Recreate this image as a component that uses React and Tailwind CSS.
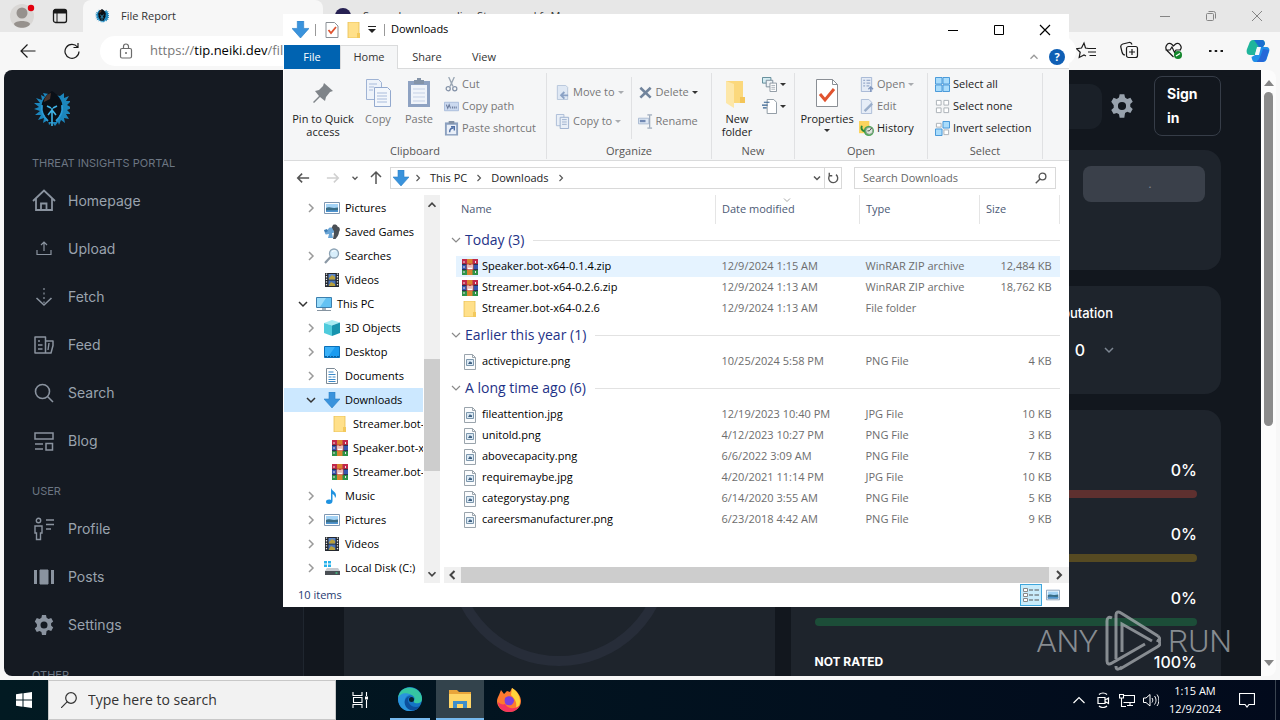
import { clsx } from 'clsx'

const NAV = [
  {
    title: 'THREAT INSIGHTS PORTAL',
    items: [
      { label: 'Homepage', icon: 'home' },
      { label: 'Upload', icon: 'upload' },
      { label: 'Fetch', icon: 'fetch' },
      { label: 'Feed', icon: 'feed' },
      { label: 'Search', icon: 'search' },
      { label: 'Blog', icon: 'blog' },
    ],
  },
  {
    title: 'USER',
    items: [
      { label: 'Profile', icon: 'profile' },
      { label: 'Posts', icon: 'posts' },
      { label: 'Settings', icon: 'gear' },
    ],
  },
  { title: 'OTHER', items: [] },
]

const TREE = [
  { label: 'Pictures', icon: 'picture', level: 1, arrow: 'closed' },
  { label: 'Saved Games', icon: 'games', level: 1 },
  { label: 'Searches', icon: 'lens', level: 1, arrow: 'closed' },
  { label: 'Videos', icon: 'film', level: 1 },
  { label: 'This PC', icon: 'pc', level: 0, arrow: 'open' },
  { label: '3D Objects', icon: 'cube', level: 1, arrow: 'closed' },
  { label: 'Desktop', icon: 'desktop', level: 1, arrow: 'closed' },
  { label: 'Documents', icon: 'document', level: 1, arrow: 'closed' },
  { label: 'Downloads', icon: 'download', level: 1, arrow: 'open', selected: true },
  { label: 'Streamer.bot-x64-0.2.6', icon: 'folder', level: 2 },
  { label: 'Speaker.bot-x64-0.1.4', icon: 'rar', level: 2 },
  { label: 'Streamer.bot-x64-0.2.6', icon: 'rar', level: 2 },
  { label: 'Music', icon: 'music', level: 1, arrow: 'closed' },
  { label: 'Pictures', icon: 'picture', level: 1, arrow: 'closed' },
  { label: 'Videos', icon: 'film', level: 1, arrow: 'closed' },
  { label: 'Local Disk (C:)', icon: 'disk', level: 1, arrow: 'closed' },
]

const LEVEL_PAD = ['pl-[11px]', 'pl-[19px]', 'pl-[27px]']

const GROUPS = [
  {
    title: 'Today (3)',
    files: [
      ['rar', 'Speaker.bot-x64-0.1.4.zip', '12/9/2024 1:15 AM', 'WinRAR ZIP archive', '12,484 KB'],
      ['rar', 'Streamer.bot-x64-0.2.6.zip', '12/9/2024 1:13 AM', 'WinRAR ZIP archive', '18,762 KB'],
      ['folder', 'Streamer.bot-x64-0.2.6', '12/9/2024 1:13 AM', 'File folder', ''],
    ],
  },
  {
    title: 'Earlier this year (1)',
    files: [['image', 'activepicture.png', '10/25/2024 5:58 PM', 'PNG File', '4 KB']],
  },
  {
    title: 'A long time ago (6)',
    files: [
      ['image', 'fileattention.jpg', '12/19/2023 10:40 PM', 'JPG File', '10 KB'],
      ['image', 'unitold.png', '4/12/2023 10:27 PM', 'PNG File', '3 KB'],
      ['image', 'abovecapacity.png', '6/6/2022 3:09 AM', 'PNG File', '7 KB'],
      ['image', 'requiremaybe.jpg', '4/20/2021 11:14 PM', 'JPG File', '10 KB'],
      ['image', 'categorystay.png', '6/14/2020 3:55 AM', 'PNG File', '5 KB'],
      ['image', 'careersmanufacturer.png', '6/23/2018 4:42 AM', 'PNG File', '9 KB'],
    ],
  },
]

const GEAR =
  'M10 2h4l.6 2.8 1.9 1.1 2.7-.9 2 3.4-2.1 1.9v2.3l2.1 1.9-2 3.4-2.7-.9-1.9 1.1L14 22h-4l-.6-2.9-1.9-1.1-2.7.9-2-3.4 2.1-1.9v-2.3L2.8 8.4l2-3.4 2.7.9 1.9-1.1zM12 8.500a3.500 3.500 0 1 0 0 7 3.500 3.500 0 0 0 0-7z'

function Icon({ name, className = 'h-4 w-4', box = 16, children }) {
  return (
    <svg aria-hidden="true" viewBox={`0 0 ${box} ${box}`} className={clsx('shrink-0', className)} fill="none">
      {children ?? ART[name]}
    </svg>
  )
}

// 16px artwork for the file manager
const ART = {
  download: <path d="M5 0h6v7h5l-8 9-8-9h5z" fill="#3a93dc" stroke="#2b7fc6" strokeWidth=".6" />,
  folder: (
    <>
      <path d="M2 0h11v16H2z" fill="#ffe08a" stroke="#e8bf52" strokeWidth=".8" />
      <path d="M11 11h3v5h-3z" fill="#f3c95c" />
    </>
  ),
  rar: (
    <>
      <path d="M0 0h16v5H0z" fill="#c2274a" />
      <path d="M0 5h16v6H0z" fill="#3656b0" />
      <path d="M0 11h16v5H0z" fill="#2c9448" />
      <path d="M0 5.3h16M0 10.7h16" stroke="#222" strokeWidth=".8" />
      <path d="M5 0h5.500v16H5z" fill="#d9832e" />
      <path d="M4.500 4.500h7v6.500h-7z" fill="#c4463a" />
      <path d="M6 5.500v4h4v-4M8 6v3" stroke="#fff" strokeWidth="1.3" />
      <path d="M2 2v2M2 7v2M2 12v2M13.500 12v2M13.500 2v2" stroke="#eadfe6" strokeWidth="1" />
    </>
  ),
  image: (
    <>
      <path d="M2.500.500h8l3 3v12h-11z" fill="#fbfcfd" stroke="#9aa4ac" />
      <path d="M10.500.500v3h3" stroke="#9aa4ac" />
      <path d="M4.500 5.500h7v6h-7z" fill="#dbe9f4" stroke="#7c97ad" />
      <path d="M6 10l2-3 1 1.500 1-.5v2z" fill="#3e5f80" />
    </>
  ),
  picture: (
    <>
      <path d="M.5 2.500h15v11H.500z" fill="#fff" stroke="#7f98b3" />
      <path d="M2 4h12v8H2z" fill="#a4d3f5" />
      <path d="M2 8c3-2 5 1 12-.5V12H2z" fill="#3a6d86" />
      <path d="M2 10.500c4-1 8 .5 12-.5v2H2z" fill="#4f94cf" />
    </>
  ),
  games: (
    <>
      <path d="M9 1c1.500-1 4-.5 4.500 1.500C16 3 16.500 6 15 8c0 3-2 5-3.500 7H9l1-6-3-4z" fill="#4b4f55" />
      <path d="M5 4c2-1 4 0 4 2 2 1 1 3-1 3l1 5H4l1-4-3 .5c-1.500-.5-1-2 0-2.500z" fill="#6aa5d6" />
      <path d="M0 6l3-1 1 2-3 2z" fill="#3d7db5" />
    </>
  ),
  lens: (
    <>
      <circle cx="10" cy="5.500" r="4.500" fill="#d8eefb" stroke="#8da3b5" strokeWidth="1.3" />
      <path d="M6.500 9L1 15" stroke="#8b98a5" strokeWidth="2.2" />
      <path d="M8 4c1-1.500 2.500-1.500 3.500-1" stroke="#fff" />
    </>
  ),
  film: (
    <>
      <path d="M1 1h14v14H1z" fill="#24282e" />
      <path d="M2.500 1.500v13M13.500 1.500v13" stroke="#e8e8e8" strokeWidth="1.3" strokeDasharray="1.3 1.3" />
      <path d="M4.500 2h7v5.500h-7z" fill="#5c86c9" />
      <path d="M4.500 8.500h7V14h-7z" fill="#4773ba" />
      <path d="M5 6l3-3 3 2v2.500H5zM5 13l2-3 4 2v2H5z" fill="#b8a03c" />
    </>
  ),
  pc: (
    <>
      <path d="M.5 1.500h15v10H.500z" fill="#63c2f3" stroke="#3c7fae" />
      <path d="M1 2h9L4 11H1z" fill="#9adcfa" />
      <path d="M6 12h4v2H6z" fill="#a8b4bd" />
      <path d="M1 14.500h14" stroke="#8593a0" />
    </>
  ),
  cube: (
    <>
      <path d="M8 0l8 2.500-8 3L0 3z" fill="#a6ecf3" />
      <path d="M0 3l8 2.500V16l-8-3z" fill="#4fcbdc" />
      <path d="M16 2.500V13L8 16V5.500z" fill="#1794ae" />
    </>
  ),
  desktop: (
    <>
      <path d="M.5 2.500h15v11H.500z" fill="#1a9bf0" stroke="#0b70b8" />
      <path d="M1 3h10L4 13H1z" fill="#3bb1f8" />
      <path d="M1 12.500h14" stroke="#0a5e9e" strokeDasharray="2 1" />
    </>
  ),
  document: (
    <>
      <path d="M2.500.500h8l3 3v12h-11z" fill="#fff" stroke="#7c8a96" />
      <path d="M4.500 4h5M4.500 6.500h7M4.500 9h3M8.500 9h3M4.500 11.500h7M4.500 13.500h7" stroke="#3a88c8" strokeWidth="1.2" />
    </>
  ),
  music: <path d="M7 0c1 3 5 3.500 5 7.500 0 1-.5 2-1 2.500 0-3-2-4-2.500-4v7c0 2-1.500 3-3.500 3s-3-1-3-2.300C2 12 4.500 11 7 12z" fill="#1e92e0" />,
  disk: (
    <>
      <path d="M0 1h3v2.500H0zM4 1h3v2.500H4zM0 4.500h3V7H0zM4 4.500h3V7H4z" fill="#27b1ea" />
      <path d="M3 8h11l2 3H1z" fill="#c7cbd0" />
      <path d="M1 11h15v4H1z" fill="#4a4f55" />
      <path d="M11.500 13h2" stroke="#3fe08f" strokeWidth="1.2" />
    </>
  ),
  cut: (
    <>
      <path d="M5 0l4.500 10M11 0L6.500 10" stroke="#9aa6b4" strokeWidth="1.4" />
      <circle cx="4.500" cy="12.500" r="2.2" stroke="#8492a8" strokeWidth="1.3" />
      <circle cx="11.500" cy="12.500" r="2.2" stroke="#8492a8" strokeWidth="1.3" />
    </>
  ),
  path: (
    <>
      <path d="M.5 3.500h15v9H.500z" fill="#cbd9ef" stroke="#a9bcdc" />
      <path d="M2.500 6l1.500 4L5.500 6 7 10M9 8v2M11 8v2M13 8v2" stroke="#68799a" strokeWidth="1.1" />
    </>
  ),
  shortcut: (
    <>
      <path d="M1 1.500h14v14H1z" fill="#8ba0bf" />
      <path d="M3 4h10v10H3z" fill="#e9eff8" />
      <path d="M5 0h6v3H5z" fill="#8392a6" />
      <path d="M6 12c0-3 1-4.500 4-4.500M7.500 6H11v4" stroke="#4f6fa5" strokeWidth="1.5" />
    </>
  ),
  move: (
    <>
      <path d="M2.500.500h9l2 2v13h-11z" fill="#dfe8f4" stroke="#b6c5db" />
      <path d="M14 11H7M10 7.500L6.500 11l3.500 3.500" stroke="#8ba2c5" strokeWidth="2" />
    </>
  ),
  copyTo: (
    <>
      <path d="M1.500.500h8v12h-8z" fill="#e9eff7" stroke="#abbcd6" />
      <path d="M5.500 3.500h9v12h-9z" fill="#e9eff7" stroke="#9bafcd" />
      <path d="M7.500 6h5M7.500 8.500h5M7.500 11h5" stroke="#9bafcd" />
    </>
  ),
  del: <path d="M2.500 3l11 10.500M13.500 3l-11 10.500" stroke="#71849c" strokeWidth="2.8" />,
  rename: (
    <>
      <path d="M.5 4.500h11v6H.500z" fill="#dce6f3" stroke="#a9b9d1" />
      <path d="M2 7.500h6" stroke="#7189b3" strokeWidth="2.5" />
      <path d="M12.500 1.500v13M10 1h5M10 15h5" stroke="#8090a8" />
    </>
  ),
  newItem: (
    <>
      <path d="M.5.500h9v6h-9z" fill="#d4ecf2" stroke="#5d8795" />
      <path d="M4.500 3.500h7v7h-7z" fill="#eef2f5" stroke="#7a8b99" />
      <path d="M8.500 6.500h7v9h-7z" fill="#fff" stroke="#8b959f" />
      <path d="M10 9h4M10 11h4M10 13h4" stroke="#a6afb8" />
    </>
  ),
  easy: (
    <>
      <path d="M5.500.500h7l3 3v12h-10z" fill="#fff" stroke="#8b959f" />
      <path d="M2 3.500h6M0 6.500h6M1 9.500h4" stroke="#33608f" strokeWidth="1.2" />
    </>
  ),
  open: (
    <>
      <path d="M2.500.500h11v15h-11z" fill="#e4ebf6" stroke="#a3b5d3" />
      <path d="M4.500 3.500h2M8 3.500h4M4.500 6.500h2M8 6.500h4M4.500 9.500h2M8 9.500h3" stroke="#7f95bd" />
      <path d="M12.500 16v-5M10 13l2.500-2.500L15 13" stroke="#7f95bd" strokeWidth="1.4" />
    </>
  ),
  edit: (
    <>
      <path d="M2.500.500h8l3 3v12h-11z" fill="#e6edf7" stroke="#abbcd6" />
      <path d="M14 5L6 13" stroke="#9aaeca" strokeWidth="2.6" />
    </>
  ),
  history: (
    <>
      <path d="M0 0h11v13H0z" fill="#fbd45e" />
      <circle cx="10.500" cy="10.500" r="5.500" fill="#4da758" />
      <circle cx="11" cy="10.500" r="3.7" fill="#dbe8dc" stroke="#8a9a8c" />
      <path d="M3 5c-1 3 0 5 3 6" stroke="#2b8a3c" strokeWidth="2" />
      <path d="M11 10.500l2.500-3M11 10.500H9" stroke="#444" />
    </>
  ),
  selectAll: (
    <path
      d="M.5.500h7v7h-7zM8.500.500h7v7h-7zM.5 8.500h7v7h-7zM8.500 8.500h7v7h-7z"
      fill="#a9dcfb"
      stroke="#3f93d6"
    />
  ),
  selectNone: (
    <path
      d="M1.500 1.500h5v5h-5zM9.500 1.500h5v5h-5zM1.500 9.500h5v5h-5zM9.500 9.500h5v5h-5z"
      fill="#fff"
      stroke="#a9afb5"
    />
  ),
  invert: (
    <>
      <path d="M1.500 2.500h5v4h-5zM9.500 9.500h5v5h-5z" fill="#fff" stroke="#a9afb5" />
      <path d="M8.500.500h7v7h-7zM.5 8.500h7v7h-7z" fill="#a9dcfb" stroke="#3f93d6" />
    </>
  ),
  check: (
    <>
      <path d="M2 .5h8.500L14 4v11.500H2z" fill="#fff" stroke="#8a8f95" />
      <path d="M4.500 8l2.500 3 5-6" stroke="#e0532f" strokeWidth="1.8" />
    </>
  ),
}

// 24px outline icons of the portal's sidebar
const NAV_ART = {
  home: <path d="M1 12L12 1.500 23 12M4 9.500V21h16V9.500M9 21v-6.500h5.500V21" strokeWidth="1.8" />,
  upload: <path d="M5 13v4.500h14V13M12 14V5M9 8l3-3 3 3" strokeWidth="1.2" />,
  fetch: (
    <>
      <path d="M4.500 13L12 20l7.500-7" strokeWidth="1.6" />
      <path d="M12 3v15" strokeWidth="1.2" strokeDasharray="2 2.500" />
    </>
  ),
  feed: (
    <>
      <path d="M3 4h10.500v16H3zM13.500 8H21v4.500L19 20h-5.500" strokeWidth="1.5" strokeLinejoin="round" />
      <path d="M6 8h2M6 12h4.500M6 16h4.500M17 10l-1 7" strokeWidth="1.4" />
    </>
  ),
  search: <path d="M10.500 3.500a7 7 0 1 0 0 14 7 7 0 0 0 0-14zM15.500 15.500L21 21" strokeWidth="1.6" />,
  blog: <path d="M3 4h18v6H3zM14 14.500h6.500V21H14zM3 15h8M3 20h8" strokeWidth="1.5" />,
  profile: (
    <>
      <circle cx="6.500" cy="3.500" r="2.2" strokeWidth="1.4" />
      <path d="M3 9h7v7H8.500v6.500h-4V16H3zM14 3h8M14 7.500h8M14 12h5" strokeWidth="1.4" />
    </>
  ),
  posts: (
    <>
      <path d="M8 5h8v14H8z" fill="currentColor" />
      <path d="M3.500 5v14M20.500 5v14" strokeWidth="3" />
    </>
  ),
  gear: <path d={GEAR} fill="currentColor" fillRule="evenodd" stroke="none" />,
}

function EagleLogo({ className }) {
  return (
    <svg aria-hidden="true" viewBox="0 0 36 36" className={className} fill="none">
      <path
        d="M9 2l2 4-4-2 1 5-6-2 4 5-6 0 5 4-5 2 6 2-5 4 6 0-3 5 6-2-1 5 5-3 1 5 3-3 3 4 3-4 1 3 2-5 4 3-1-5 5 1-3-5 5 0-4-4 5-2-5-3 4-4-5 0 3-5-5 2 0-5-4 3z"
        fill="#1c86bd"
      />
      <path d="M18 0C10 5 6 12 8 20l6 11h8l6-11c2-8-2-15-10-20z" fill="#0a0f16" />
      <path d="M17 2c-4 1-7 5-7 9l6-3z" fill="#4a342c" />
      <path d="M8 14c-1 7 1 11 6 16M28 14c1 7-1 11-6 16" stroke="#2b9bd6" strokeWidth="1.8" />
      <path d="M13 15l4 2M23 15l-4 2M18 19l-4 5M18 19l4 5M18 17v18" stroke="#3fb3e6" strokeWidth="1.6" />
    </svg>
  )
}

function Chevron({ dir = 'right', className = 'h-4 w-4', width = 1.5 }) {
  const d = {
    right: 'M6 4l4 4-4 4',
    left: 'M10 4L6 8l4 4',
    down: 'M4 6l4 4 4-4',
    up: 'M4 10l4-4 4 4',
  }[dir]
  return (
    <Icon className={className}>
      <path d={d} stroke="currentColor" strokeWidth={width} />
    </Icon>
  )
}

function Caret({ muted }) {
  return (
    <Icon className="h-[6px] w-[6px]" box={6}>
      <path d="M0 2h6L3 5z" fill={muted ? '#a9acb0' : '#333'} />
    </Icon>
  )
}

function BrowserTabs() {
  return (
    <div className="flex h-8 shrink-0 items-stretch bg-[#e7e7e7]">
      <div className="flex w-[83px] items-center gap-4 pl-2">
        <button type="button" aria-label="Account">
          <Icon className="h-7 w-7" box={28}>
            <circle cx="14" cy="14" r="12" fill="#d9d7d5" />
            <circle cx="14" cy="11" r="5.500" fill="#96918d" />
            <path d="M6 22c1-4 15-4 16 0-2 5-14 5-16 0z" fill="#96918d" />
            <circle cx="23" cy="6" r="3.2" fill="#e3000f" />
          </Icon>
        </button>
        <button type="button" aria-label="Workspaces">
          <Icon>
            <rect x="1.500" y="1.500" width="13" height="13" rx="2" stroke="#1b1b1b" strokeWidth="1.3" />
            <path d="M2 2h12v3H2zM5 3v11" fill="#1b1b1b" stroke="#1b1b1b" />
          </Icon>
        </button>
      </div>
      <div className="flex w-60 items-center gap-3 rounded-t-lg bg-[#f7f7f7] px-3 text-[11px] text-[#333]">
        <EagleLogo className="h-[14px] w-[14px]" />
        File Report
      </div>
      <div className="flex w-60 items-center gap-3 overflow-hidden px-3 text-[11px] text-[#333]">
        <span className="h-4 w-4 shrink-0 rounded-full bg-[#262052]" />
        <span className="whitespace-nowrap">Supercharge your live Stream and fr M</span>
      </div>
      <div className="grow" />
      <div className="flex items-center gap-[30px] pr-[15px] text-[#858585]">
        <button type="button" aria-label="Minimize">
          <Icon><path d="M3 8.500h10" stroke="currentColor" /></Icon>
        </button>
        <button type="button" aria-label="Restore">
          <Icon>
            <rect x="3.500" y="5.500" width="7" height="7" rx="1" stroke="currentColor" />
            <path d="M5.500 3.500h5a2 2 0 0 1 2 2v5" stroke="currentColor" />
          </Icon>
        </button>
        <button type="button" aria-label="Close">
          <Icon><path d="M3 3l10 10M13 3L3 13" stroke="currentColor" /></Icon>
        </button>
      </div>
    </div>
  )
}

function BrowserToolbar() {
  return (
    <div className="flex h-[38px] shrink-0 items-center bg-[#f7f7f7] pr-[14px] text-[#1b1b1b]">
      <div className="flex w-[100px] items-center gap-7 pl-5">
        <button type="button" aria-label="Back">
          <Icon><path d="M15.500 8H1M7.500 1.500L1 8l6.500 6.500" stroke="currentColor" strokeWidth="1.2" /></Icon>
        </button>
        <button type="button" aria-label="Reload">
          <Icon>
            <path d="M15 8.500A7 7 0 1 1 13.500 4M14 0v4.500H9.500" stroke="currentColor" strokeWidth="1.2" />
          </Icon>
        </button>
      </div>
      <div className="flex h-[30px] grow items-center gap-4 rounded-full bg-white px-[18px]">
        <Icon>
          <rect x="2.500" y="5.500" width="11" height="9.500" rx="1.500" stroke="#6b6b6b" strokeWidth="1.2" />
          <path d="M5.500 5.500v-2a2.500 2.500 0 0 1 5 0v2" stroke="#6b6b6b" strokeWidth="1.2" />
          <circle cx="8" cy="10" r="1" fill="#6b6b6b" />
        </Icon>
        <div className="text-[13px] text-[#777]">
          https://<span className="text-black">tip.neiki.dev</span>/file
        </div>
      </div>
      <div className="flex items-center gap-6">
        <button type="button" aria-label="Favorites">
          <Icon className="h-5 w-5" box={20}>
            <path d="M12.500 7.500l-3-.5L8 2 5.500 7l-5 .7 3.700 3.500-1 5.300L8 14l2 1M12.500 7.500H20M12 11h8M13.500 14.500H20" stroke="currentColor" strokeWidth="1.2" />
          </Icon>
        </button>
        <button type="button" aria-label="Collections">
          <Icon className="h-5 w-5" box={20}>
            <path d="M5 14c-2 0-2.500-1-3-3L.8 6c-.3-1.500.5-2.500 2-3L9 1.500c1.500-.3 2.500.3 3 2" stroke="currentColor" strokeWidth="1.2" />
            <rect x="6.500" y="5.500" width="11" height="11" rx="2" stroke="currentColor" strokeWidth="1.2" />
            <path d="M12 8v6M9 11h6" stroke="currentColor" strokeWidth="1.2" />
          </Icon>
        </button>
        <button type="button" aria-label="Browser essentials">
          <Icon className="h-5 w-5" box={20}>
            <path d="M9.500 16L3 9.500C0 6 4 0 8 3.500l1.500 1.500L11 3.500C15 0 19 6 16 9M1.500 9H6l2-3 2.500 5.500L12 9h5" stroke="currentColor" strokeWidth="1.2" />
            <circle cx="14" cy="14" r="4" fill="#13852b" />
            <path d="M12 15l4-2.500" stroke="#fff" strokeWidth="1.3" />
          </Icon>
        </button>
        <button type="button" aria-label="Settings and more">
          <Icon>
            <path d="M1 8h2.500M6.700 8h2.500M12.500 8H15" stroke="currentColor" strokeWidth="2.2" />
          </Icon>
        </button>
        <button type="button" aria-label="Copilot" className="-mr-1 -ml-[2px]">
          <Icon className="h-6 w-6" box={24}>
            <path d="M7 1h9c2 0 3 2 3 4l-2 3h-3c-2 0-3 1-4 4l-1 4H4c-3 0-4-3-3-6l2-5c1-3 2-4 4-4z" fill="#1fb59b" />
            <path d="M8 1h8c2 0 2.500 2 3 4l-2 3h-4z" fill="#1a6fd0" />
            <path d="M17 23H9c-2 0-3-2-3.500-5L9 16c2 0 3-2 4-5l1-3h6c3 0 4 2 3 5l-2 6c-1 3-2 4-4 4z" fill="#1f8fe8" />
            <path d="M11 22c2-1 3-4 5-9l1-3 6 1-3 10-3 2h-6z" fill="#2567d8" />
            <path d="M11 8h4l-2 8H9z" fill="#f3f8fc" />
          </Icon>
        </button>
      </div>
    </div>
  )
}

function Sidebar() {
  return (
    <aside className="flex w-[300px] shrink-0 flex-col border-r border-[#1f262f] bg-[#151a22] px-7 font-[Inter,sans-serif]">
      <a href="#home" aria-label="Home" className="pt-[21px] pb-[10px] pl-[2px]">
        <EagleLogo className="h-9 w-9" />
      </a>
      {NAV.map((section) => (
        <nav key={section.title} className="shrink-0">
          <h2 className="flex h-10 items-center pt-3 text-[11px] text-[#6c7683]">{section.title}</h2>
          {section.items.map((item) => (
            <a key={item.label} href={`#${item.icon}`} className="flex h-12 items-center gap-3 text-sm text-[#9aa3ae]">
              <Icon className="h-6 w-6 text-[#8a939f]" box={24}>
                <g stroke="currentColor">{NAV_ART[item.icon]}</g>
              </Icon>
              {item.label}
            </a>
          ))}
        </nav>
      ))}
    </aside>
  )
}

function Rating({ label, value, bar }) {
  return (
    <div className="flex h-16 flex-col">
      <div className="flex h-6 items-center justify-between">
        <span className="text-xs font-bold">{label}</span>
        <span className="text-base leading-[22px] font-medium">{value}</span>
      </div>
      {bar && <div className={clsx('mt-2 h-2 shrink-0 rounded-full', bar)} />}
    </div>
  )
}

function Report() {
  return (
    <main className="flex min-w-0 grow flex-col gap-4 overflow-hidden bg-[#12171e] px-10 font-[Inter,sans-serif] text-white">
      <header className="flex h-16 shrink-0 items-center gap-[6px] pt-2">
        <div className="h-[45px] grow rounded-xl bg-[#1a2028]" />
        <div className="flex items-center gap-[18px]">
          <button type="button" aria-label="Preferences" className="text-[#98a2ad]">
            <Icon className="h-7 w-7" box={24}>
              <path d={GEAR} fill="currentColor" fillRule="evenodd" />
            </Icon>
          </button>
          <button
            type="button"
            className="h-[60px] w-[67px] rounded-lg border border-[#363d48] px-3 text-left text-sm leading-6 font-bold"
          >
            Sign in
          </button>
        </div>
      </header>
      <section className="flex h-[120px] shrink-0 justify-end rounded-2xl bg-[#1e242c] p-4">
        <button type="button" className="h-9 w-[122px] rounded-lg bg-[#3a404a] pl-3 text-xs text-[#7d8490]">
          .
        </button>
      </section>
      <section className="flex h-[108px] shrink-0 flex-col items-end gap-3 rounded-2xl bg-[#1e242c] pt-4 pr-[108px]">
        <h3 className="text-[13px] leading-[22px] font-medium">Reputation</h3>
        <div className="flex items-center gap-4 text-base leading-7 font-medium">
          0
          <Chevron dir="down" className="-mr-1 h-4 w-4 text-[#7d8692]" />
        </div>
      </section>
      <div className="grid min-h-0 grow grid-cols-2 gap-4">
        <section className="flex justify-center rounded-t-2xl bg-[#1e242c] pt-[34px]">
          <svg aria-hidden="true" viewBox="0 0 222 222" className="h-[222px] w-[222px] shrink-0">
            <circle cx="111" cy="111" r="106" fill="none" stroke="#272d39" strokeWidth="10" />
          </svg>
        </section>
        <section className="overflow-hidden rounded-t-2xl bg-[#1e242c] px-6 pt-12">
          <Rating value="0%" bar="bg-[#5e302f]" />
          <Rating value="0%" bar="bg-[#564a22]" />
          <Rating value="0%" bar="bg-[#1c4d38]" />
          <Rating label="NOT RATED" value="100%" />
        </section>
      </div>
    </main>
  )
}

function Browser() {
  return (
    <div className="flex min-h-0 grow flex-col bg-[#f7f7f7]">
      <BrowserTabs />
      <BrowserToolbar />
      <div className="mr-1 mb-1 ml-1 flex min-h-0 grow overflow-hidden rounded-lg bg-[#fcfcfc]">
        <Sidebar />
        <Report />
        <div className="flex w-[15px] shrink-0 flex-col items-center justify-between py-2">
          <Icon className="h-[10px] w-[10px]" box={10}><path d="M5 2l5 6H0z" fill="#858585" /></Icon>
          <div className="mt-1 h-[334px] w-[9px] rounded-full bg-[#8b8b8b]" />
          <div className="grow" />
          <Icon className="h-[10px] w-[10px]" box={10}><path d="M0 2h10L5 8z" fill="#858585" /></Icon>
        </div>
      </div>
    </div>
  )
}

function TitleBar() {
  return (
    <div className="flex h-[31px] shrink-0 items-center pl-2">
      <Icon name="download" className="h-[17px] w-[17px]" />
      <span className="mr-2 ml-[6px] h-3 w-px bg-[#999]" />
      <div className="flex grow items-center gap-[6px]">
        <Icon name="check" />
        <Icon name="folder" />
        <Icon className="h-2 w-2" box={8}>
          <path d="M0 .5h8" stroke="#222" />
          <path d="M0 3h8L4 7z" fill="#222" />
        </Icon>
        <span className="ml-[2px] h-3 w-px bg-[#999]" />
        <h1 className="text-[11px] text-black">Downloads</h1>
      </div>
      <div className="flex gap-[30px] pr-4">
        <button type="button" aria-label="Minimize">
          <Icon><path d="M3 8.500h10" stroke="#000" /></Icon>
        </button>
        <button type="button" aria-label="Maximize">
          <Icon><path d="M3.500 3.500h9v9h-9z" stroke="#000" /></Icon>
        </button>
        <button type="button" aria-label="Close">
          <Icon><path d="M3 3l10 10M13 3L3 13" stroke="#000" strokeWidth="1.2" /></Icon>
        </button>
      </div>
    </div>
  )
}

function RibbonTabs() {
  return (
    <div className="flex h-6 shrink-0 items-center border-b border-[#dadbdc] text-[11px] text-[#333]">
      <button type="button" className="h-6 w-14 bg-[#0063b1] pt-px text-white">File</button>
      <button type="button" className="mt-px h-6 w-[58px] border-x border-t border-[#dadbdc] bg-[#f5f6f7]">
        Home
      </button>
      <button type="button" className="h-6 w-[58px] pt-px">Share</button>
      <button type="button" className="h-6 w-14 pt-px">View</button>
      <div className="grow" />
      <Chevron dir="up" className="mr-2 h-[14px] w-[14px] text-[#999]" />
      <button
        type="button"
        aria-label="Help"
        className="mr-1 h-4 w-4 rounded-full bg-[#0f5fb5] text-[11px] leading-4 font-bold text-white"
      >
        ?
      </button>
    </div>
  )
}

function RibbonGroup({ title, className, children }) {
  return (
    <section className={clsx('mt-1 mb-px flex shrink-0 flex-col border-r border-[#e0e1e3]', className)}>
      <div className="flex grow">{children}</div>
      <h2 className="h-4 text-center text-[11px] leading-4 text-[#555]">{title}</h2>
    </section>
  )
}

function BigButton({ label, muted, className, caret, children }) {
  return (
    <button
      type="button"
      className={clsx(
        'flex shrink-0 flex-col items-center pt-1 text-[11px] leading-[13px]',
        muted ? 'text-[#777]' : 'text-[#222]',
        className,
      )}
    >
      <Icon className="mb-[3px] h-8 w-8" box={32}>{children}</Icon>
      {label}
      {caret && <span className="pt-[2px]"><Caret /></span>}
    </button>
  )
}

function SmallButton({ label, icon, muted, caret }) {
  return (
    <button
      type="button"
      className={clsx(
        'flex h-[22px] items-center gap-[3px] text-[11px] whitespace-nowrap',
        muted ? 'text-[#777]' : 'text-[#222]',
      )}
    >
      <Icon name={icon} className="h-[15px] w-[15px]" />
      {label}
      {caret && <Caret muted={muted && caret !== 'dark'} />}
    </button>
  )
}

function Ribbon() {
  return (
    <div className="flex h-[92px] shrink-0 border-b border-[#dadbdc] bg-[#f5f6f7]">
      <RibbonGroup title="Clipboard" className="w-[263px]">
        <BigButton label={<>Pin to Quick<br />access</>} className="w-[78px]">
          <path d="M17 6l9 8-3 1-4 5-1 4-5-4-6 6-1-1 6-6-4-5 4-1 4-4z" fill="#7f8489" />
        </BigButton>
        <BigButton label="Copy" muted className="w-[32px]">
          <path d="M4.500 2.500h12l3 3v17h-15z" fill="#eef3fa" stroke="#9fb3d4" />
          <path d="M12.500 10.500h13l3 3v16h-16z" fill="#f3f7fc" stroke="#93a9ce" />
          <path d="M7 7h8M7 10h5M7 13h4M15 16h10M15 19h10M15 22h10M15 25h10" stroke="#a8bbdb" />
        </BigButton>
        <BigButton label="Paste" muted className="w-[50px]">
          <path d="M5 4h22v26H5z" fill="#8ea2c2" />
          <path d="M8 8h16v19H8z" fill="#f0f4fa" />
          <path d="M11 3h10v4H11zM14 1h4v3h-4z" fill="#8494a9" />
          <path d="M10 12h12M10 16h12M10 20h12M10 24h12" stroke="#c5d1e6" />
        </BigButton>
        <div className="flex flex-col">
          <SmallButton label="Cut" icon="cut" muted />
          <SmallButton label="Copy path" icon="path" muted />
          <SmallButton label="Paste shortcut" icon="shortcut" muted />
        </div>
      </RibbonGroup>
      <RibbonGroup title="Organize" className="w-[165px]">
        <div className="flex flex-col gap-[7px] py-2 pr-[7px] pl-2">
          <SmallButton label="Move to" icon="move" muted caret="light" />
          <SmallButton label="Copy to" icon="copyTo" muted caret="light" />
        </div>
        <div className="my-1 w-px bg-[#e0e1e3]" />
        <div className="flex flex-col gap-[7px] py-2 pl-[6px]">
          <SmallButton label="Delete" icon="del" muted caret="dark" />
          <SmallButton label="Rename" icon="rename" muted />
        </div>
      </RibbonGroup>
      <RibbonGroup title="New" className="w-[83px]">
        <BigButton label={<>New<br />folder</>} className="w-[50px]">
          <path d="M5 4h17v22H5z" fill="#fbd87c" />
          <path d="M5 4l8 3v24l-8-5z" fill="#fde7a8" />
          <path d="M19 20h5v6h-5z" fill="#f4c558" />
        </BigButton>
        <div className="flex flex-col">
          <SmallButton icon="newItem" caret="dark" />
          <SmallButton icon="easy" caret="dark" />
        </div>
      </RibbonGroup>
      <RibbonGroup title="Open" className="w-[133px]">
        <BigButton label="Properties" caret className="w-[64px]">
          <path d="M5.500 2.500h16l5 5v22h-21z" fill="#fff" stroke="#8a8f95" />
          <path d="M21.500 2.500v5h5" stroke="#8a8f95" />
          <path d="M9 17l5 6 9-11" stroke="#e0532f" strokeWidth="3" />
        </BigButton>
        <div className="flex flex-col">
          <SmallButton label="Open" icon="open" muted caret="light" />
          <SmallButton label="Edit" icon="edit" muted />
          <SmallButton label="History" icon="history" />
        </div>
      </RibbonGroup>
      <RibbonGroup title="Select" className="w-[115px]">
        <div className="flex flex-col pl-[7px]">
          <SmallButton label="Select all" icon="selectAll" />
          <SmallButton label="Select none" icon="selectNone" />
          <SmallButton label="Invert selection" icon="invert" />
        </div>
      </RibbonGroup>
    </div>
  )
}

function AddressRow() {
  return (
    <div className="flex h-[34px] shrink-0 items-center pr-[13px] text-[#555]">
      <div className="flex w-[106px] items-center gap-2 pl-3">
        <button type="button" aria-label="Back">
          <Icon className="h-[14px] w-[14px]"><path d="M15 8H2M7 3L2 8l5 5" stroke="#555" strokeWidth="1.8" /></Icon>
        </button>
        <button type="button" aria-label="Forward" className="ml-2">
          <Icon className="h-[14px] w-[14px]"><path d="M1 8h13M9 3l5 5-5 5" stroke="#d0d0d0" strokeWidth="1.8" /></Icon>
        </button>
        <Chevron dir="down" className="ml-[2px] h-[10px] w-[10px]" width={2} />
        <button type="button" aria-label="Up">
          <Icon><path d="M8 14V2M3 7l5-5 5 5" stroke="#555" strokeWidth="1.5" /></Icon>
        </button>
      </div>
      <div className="flex h-[22px] grow items-center border border-[#d9d9d9] text-[11px] text-[#222]">
        <Icon name="download" className="mr-[3px] ml-[2px] h-4 w-4" />
        <Chevron className="h-3 w-3 text-[#555]" />
        <span className="px-[6px]">This PC</span>
        <Chevron className="h-3 w-3 text-[#555]" />
        <span className="px-[6px]">Downloads</span>
        <Chevron className="h-3 w-3 text-[#555]" />
        <div className="grow" />
        <Chevron dir="down" className="mr-px h-3 w-3 text-[#555]" width={2} />
        <button type="button" aria-label="Refresh" className="h-full border-l border-[#d9d9d9] px-[2px]">
          <Icon className="h-3 w-3">
            <path d="M12 3.500A6 6 0 1 1 4 4M3 1v4h4" stroke="#555" strokeWidth="1.8" />
          </Icon>
        </button>
      </div>
      <label className="ml-3 flex h-[22px] w-[202px] items-center border border-[#d9d9d9] pr-2 pl-2">
        <input
          type="search"
          aria-label="Search Downloads"
          placeholder="Search Downloads"
          className="w-0 grow text-[11px] outline-none placeholder:text-[#666]"
        />
        <Icon className="h-3 w-3">
          <circle cx="10" cy="6" r="4.500" stroke="#555" strokeWidth="1.8" />
          <path d="M7 9l-6 6" stroke="#555" strokeWidth="1.8" />
        </Icon>
      </label>
    </div>
  )
}

function FolderTree() {
  return (
    <div className="flex w-[156px] shrink-0">
      <ul className="w-[140px] pt-px pr-px">
        {TREE.map((node, i) => (
          <li
            key={i}
            className={clsx(
              'flex h-6 items-center gap-[5px] overflow-hidden text-[11px] whitespace-nowrap text-black',
              LEVEL_PAD[node.level],
              node.selected && 'bg-[#cce8ff]',
            )}
          >
            <span className="h-4 w-4 shrink-0">
              {node.arrow === 'closed' && <Chevron className="h-4 w-4 text-[#9a9a9a]" />}
              {node.arrow === 'open' && <Chevron dir="down" className="h-4 w-4 text-[#333]" />}
            </span>
            <Icon name={node.icon} />
            {node.label}
          </li>
        ))}
      </ul>
      <div className="flex w-4 flex-col items-center justify-between bg-[#f0f0f0] py-[2px]">
        <Chevron dir="up" className="h-4 w-[14px] text-[#444]" width={2} />
        <div className="mt-[146px] h-[112px] w-4 bg-[#cdcdcd]" />
        <div className="grow" />
        <Chevron dir="down" className="h-[14px] w-[14px] text-[#444]" width={2} />
      </div>
    </div>
  )
}

function FileTable() {
  return (
    <div className="flex min-w-0 grow flex-col pl-1">
      <div className="grow overflow-hidden pr-[9px] pl-3">
        <table className="w-full table-fixed text-left text-[11px] whitespace-nowrap">
          <colgroup>
            <col />
            <col className="w-36" />
            <col className="w-[120px]" />
            <col className="w-20" />
          </colgroup>
          <thead>
            <tr className="h-[29px] text-[#4c5a75]">
              <th scope="col" className="border-r border-[#e5e5e5] pl-[5px] font-normal">Name</th>
              <th scope="col" className="relative border-r border-[#e5e5e5] pl-[6px] font-normal">
                Date modified
                <Chevron dir="down" className="absolute -top-px left-[65px] h-3 w-3 text-[#888]" width={1} />
              </th>
              <th scope="col" className="border-r border-[#e5e5e5] pl-[6px] font-normal">Type</th>
              <th scope="col" className="border-r border-[#e5e5e5] pl-[6px] font-normal">Size</th>
            </tr>
          </thead>
          {GROUPS.map((group, g) => (
            <tbody key={group.title}>
              <tr>
                <th scope="rowgroup" colSpan={4} className="h-8 p-0 font-normal">
                  <div className="-ml-2 flex items-center gap-px text-sm text-[#1e3287]">
                    <Chevron dir="down" className="h-4 w-4 text-[#8a8a8a]" width={1.2} />
                    {group.title}
                    <span className="ml-2 h-px grow bg-[#e2e2e2]" />
                  </div>
                </th>
              </tr>
              {group.files.map(([icon, name, date, type, size], i) => (
                <tr key={name} className={clsx('h-[21px] text-[#6d6d6d]', g === 0 && i === 0 && 'bg-[#e5f3ff]')}>
                  <td className="p-0 pl-[6px]">
                    <div className="flex items-center gap-1 text-black">
                      <Icon name={icon} />
                      {name}
                    </div>
                  </td>
                  <td className="p-0 pl-[6px]">{date}</td>
                  <td className="p-0 pl-[6px]">{type}</td>
                  <td className="p-0 pr-2 text-right">{size}</td>
                </tr>
              ))}
            </tbody>
          ))}
        </table>
      </div>
      <div className="flex h-4 shrink-0 items-center bg-[#f0f0f0]">
        <Chevron dir="left" className="h-4 w-[17px] text-[#444]" width={2} />
        <div className="h-4 grow bg-[#cdcdcd]" />
        <Chevron className="h-4 w-5 text-[#444]" width={2} />
      </div>
    </div>
  )
}

function StatusBar() {
  return (
    <div className="flex h-6 shrink-0 items-center pr-[9px] pl-[14px] text-[11px] text-[#1e3a70]">
      <span className="grow">10 items</span>
      <button
        type="button"
        aria-label="Details view"
        className="mr-1 flex h-[22px] w-[22px] items-center justify-center border border-[#3ea6dc] bg-[#c9ecfb]"
      >
        <Icon>
          <path d="M.5 1.500h4v3h-4zM.5 6.500h4v3h-4zM.5 11.500h4v3h-4z" fill="#fff" stroke="#888" />
          <path d="M6 3h4M11.500 3H16M6 8h4M11.500 8H16M6 13h4M11.500 13H16" stroke="#555" />
        </Icon>
      </button>
      <button type="button" aria-label="Large icons view">
        <Icon name="picture" className="h-[14px] w-[14px]" />
      </button>
    </div>
  )
}

function Explorer() {
  return (
    <section
      aria-label="Downloads"
      className="absolute top-[14px] right-[211px] bottom-[113px] left-[283px] flex flex-col overflow-hidden bg-white pl-px"
    >
      <TitleBar />
      <RibbonTabs />
      <Ribbon />
      <AddressRow />
      <div className="flex min-h-0 grow">
        <FolderTree />
        <FileTable />
      </div>
      <StatusBar />
    </section>
  )
}

function Watermark() {
  return (
    <div className="pointer-events-none absolute right-12 bottom-12 flex items-center gap-[7px] font-[Roboto,sans-serif] text-[32px] font-light text-[#b4b8bd] opacity-70">
      ANY
      <svg aria-hidden="true" viewBox="0 0 56 62" className="h-[62px] w-14" fill="none" stroke="currentColor" strokeWidth="3">
        <path d="M7 8C3 6 2 9 2 11v40c0 3 2 4 5 2l33-19" />
        <path d="M17 42V14l30 17M53 26L16 3c-3-2-5-1-5 2v44M53 26c3 3 2 6-1 4" />
        <path d="M17 57c-4 3-6 3-6-1M15 59l37-22c4-2 4-5 0-7" />
      </svg>
      RUN
    </div>
  )
}

function Taskbar() {
  return (
    <footer className="flex h-10 shrink-0 items-stretch bg-gradient-to-r from-[#021a22] to-[#020a1c] text-white">
      <button type="button" aria-label="Start" className="flex w-12 items-center justify-center">
        <Icon><path d="M0 2.300L6.500 1.300v6.200H0zM7.500 1.200L16 0v7.500H7.500zM0 8.500h6.500v6.200L0 13.700zM7.500 8.500H16V16l-8.500-1.200z" fill="#fff" /></Icon>
      </button>
      <label className="flex w-72 items-center gap-[11px] border border-[#c8c8c8] bg-[#f2f2f2] pl-3">
        <Icon>
          <circle cx="10" cy="6" r="5.300" stroke="#333" strokeWidth="1.2" />
          <path d="M6.300 9.700L0 16" stroke="#333" strokeWidth="1.2" />
        </Icon>
        <input
          type="search"
          aria-label="Type here to search"
          placeholder="Type here to search"
          className="w-0 grow text-sm outline-none placeholder:text-[#333]"
        />
      </label>
      <button type="button" aria-label="Task View" className="flex w-12 items-center justify-center">
        <Icon>
          <path d="M1 0v3.500h9V0M1 16v-3.500h9V16M1.500 5.500H10v5H1.500zM14.500 0v4M14.500 8v8" stroke="#fff" strokeWidth="1.1" />
          <path d="M13 4.500h3v3h-3z" fill="#fff" />
        </Icon>
      </button>
      <div className="flex">
        <button type="button" aria-label="Microsoft Edge" className="flex w-[52px] items-center justify-center">
          <span className="flex h-10 w-10 items-center justify-center border-b-2 border-[#76b9ed]">
            <Icon className="h-6 w-6" box={24}>
              <circle cx="12" cy="12" r="12" fill="#1474c4" />
              <path d="M0 11C1 2 9-1 15 1c6 2 9 6 9 11 0 4-4 5-7 4-3-2 1-3-1-6-4-5-12-3-16 1z" fill="#35c6a2" />
              <path d="M0 12C1 6 9 5 13 8c-5 0-7 4-6 8 1 5 7 7 13 5-4 4-11 4-15 1-3-2-5-6-5-10z" fill="#2a94dc" />
              <path d="M13 9c-3 1-4 4-2 7 2 4 7 5 11 3-4 6-10 5-13 2-4-4-3-11 4-12z" fill="#0c4f9d" />
              <circle cx="13.500" cy="12.500" r="2.500" fill="#07202c" />
            </Icon>
          </span>
        </button>
        <button
          type="button"
          aria-label="File Explorer"
          className="flex w-12 items-center justify-center border-b-2 border-[#76b9ed] bg-[#33434c]"
        >
          <Icon className="h-6 w-6" box={24}>
            <path d="M1 3h8l2 2h12v16H1z" fill="#e9a53a" />
            <path d="M1 7h22v14H1z" fill="#ffd667" />
            <path d="M5 21v-7h14v7h-4v-4H9v4z" fill="#3f8fcb" />
          </Icon>
        </button>
        <button type="button" aria-label="Firefox" className="flex w-[50px] items-center justify-center">
          <Icon className="h-6 w-6" box={24}>
            <path d="M2 7l2-5 3 4 3-3 3 1 2-4c5 3 9 8 9 13 0 6-5 11-12 11S0 19 0 13c0-2 1-4 2-6z" fill="#ff7a2f" />
            <path d="M15 0c5 3 8 8 8 13 0 3-1 6-4 8 1-6 0-9-5-14z" fill="#ffd43b" />
            <path d="M1 14c0 6 5 10 11 10s9-3 11-7c-5 5-12 4-15-1-2 1-5 0-7-2z" fill="#f5345f" />
            <path d="M8 10c3-3 8-2 9 2 0 4-3 6-6 5-3 0-4-3-3-7z" fill="#7d3fe0" />
          </Icon>
        </button>
      </div>
      <div className="grow" />
      <div className="flex items-center gap-2">
        <Icon><path d="M2.500 11L8 5.500l5.500 5.500" stroke="#fff" strokeWidth="1.2" /></Icon>
        <Icon>
          <path d="M3 5.500h7v6H3zM10 8l3.500-2v5.500L10 9.500M4 2.500c2-2 6-2 8 0M4 14c2 2 6 2 8 0" stroke="#fff" strokeWidth="1.2" />
        </Icon>
        <Icon>
          <path d="M4.500 3.500h11v7h-11M8 13.500h6M11 10.500v3M.5 2.500h4v3.500h-4zM2.500 6v8.500H7" stroke="#fff" strokeWidth="1.1" />
        </Icon>
        <Icon>
          <path d="M.5 6v4.500H3L7 14V2.500L3 6zM9 6c1 1.500 1 3 0 4.500M11.500 4c2 2.500 2 6 0 8.500M14 2.500c2.500 3.500 2.500 8 0 11.500" stroke="#fff" />
        </Icon>
      </div>
      <div className="flex w-[72px] flex-col justify-center text-center text-[11px] leading-[18px]">
        <time>1:15 AM</time>
        <time>12/9/2024</time>
      </div>
      <button type="button" aria-label="Notifications" className="mr-1 flex w-[45px] items-center justify-center border-r border-[#3a4450] pr-3">
        <Icon><path d="M.5 1.500h15v11H10l-2 2.500-2-2.500H.500z" stroke="#fff" strokeWidth="1.2" /></Icon>
      </button>
    </footer>
  )
}

export default function App() {
  return (
    <div className="relative flex h-screen flex-col overflow-hidden font-['Open_Sans',sans-serif]">
      <Browser />
      <Explorer />
      <Watermark />
      <Taskbar />
    </div>
  )
}
